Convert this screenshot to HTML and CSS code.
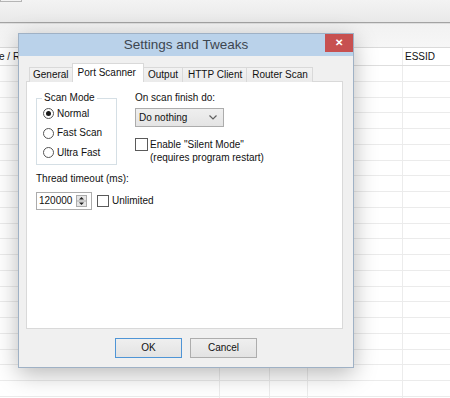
FILE: index.html
```html
<!doctype html>
<html>
  <head>
    <meta charset="utf-8">
    <meta name="viewport" content="width=device-width, initial-scale=1.0">
    <title>Settings and Tweaks</title>
    <link rel="stylesheet" href="styles.css">
  </head>
  <body>
    <div class="app">
      <div class="toolbar"><span class="tool-btn"></span></div>
      <div class="strip"></div>
      <div class="grid">
        <div class="grid-row grid-head"><span>e / R</span><span></span><span></span><span></span><span>ESSID</span></div>
        <div class="grid-row"><span></span><span></span><span></span><span></span><span></span></div>
        <div class="grid-row"><span></span><span></span><span></span><span></span><span></span></div>
        <div class="grid-row"><span></span><span></span><span></span><span></span><span></span></div>
        <div class="grid-row"><span></span><span></span><span></span><span></span><span></span></div>
        <div class="grid-row"><span></span><span></span><span></span><span></span><span></span></div>
        <div class="grid-row"><span></span><span></span><span></span><span></span><span></span></div>
        <div class="grid-row"><span></span><span></span><span></span><span></span><span></span></div>
        <div class="grid-row"><span></span><span></span><span></span><span></span><span></span></div>
        <div class="grid-row"><span></span><span></span><span></span><span></span><span></span></div>
        <div class="grid-row"><span></span><span></span><span></span><span></span><span></span></div>
        <div class="grid-row"><span></span><span></span><span></span><span></span><span></span></div>
        <div class="grid-row"><span></span><span></span><span></span><span></span><span></span></div>
        <div class="grid-row"><span></span><span></span><span></span><span></span><span></span></div>
        <div class="grid-row"><span></span><span></span><span></span><span></span><span></span></div>
        <div class="grid-row"><span></span><span></span><span></span><span></span><span></span></div>
        <div class="grid-row"><span></span><span></span><span></span><span></span><span></span></div>
        <div class="grid-row"><span></span><span></span><span></span><span></span><span></span></div>
        <div class="grid-row"><span></span><span></span><span></span><span></span><span></span></div>
        <div class="grid-row"><span></span><span></span><span></span><span></span><span></span></div>
        <div class="grid-row"><span></span><span></span><span></span><span></span><span></span></div>
        <div class="grid-row"><span></span><span></span><span></span><span></span><span></span></div>
        <div class="grid-row"><span></span><span></span><span></span><span></span><span></span></div>
      </div>
    </div>

    <div class="dialog">
      <div class="titlebar">
        <span></span>
        <span class="title">Settings and Tweaks</span>
        <span class="close">&#x2715;</span>
      </div>
      <div class="dialog-body">
        <div class="tabs">
          <span class="tab">General</span>
          <span class="tab active">Port Scanner</span>
          <span class="tab">Output</span>
          <span class="tab">HTTP Client</span>
          <span class="tab">Router Scan</span>
        </div>
        <div class="panel">
          <div class="top-row">
            <fieldset class="group">
              <legend>Scan Mode</legend>
              <div class="radio-row"><span class="radio checked"></span>Normal</div>
              <div class="radio-row"><span class="radio"></span>Fast Scan</div>
              <div class="radio-row"><span class="radio"></span>Ultra Fast</div>
            </fieldset>
            <div class="finish">
              <div class="label">On scan finish do:</div>
              <div class="select">
                <span>Do nothing</span>
                <svg width="8" height="5" viewBox="0 0 8 5"><path d="M0.5 0.5 L4 4 L7.5 0.5" fill="none" stroke="#606060" stroke-width="1.2"/></svg>
              </div>
              <div class="check-row"><span class="checkbox"></span>Enable "Silent Mode"</div>
              <div class="note">(requires program restart)</div>
            </div>
          </div>
          <div class="timeout">
            <div class="label">Thread timeout (ms):</div>
            <div class="timeout-row">
              <div class="spin">
                <span>120000</span>
                <span class="spin-btns">
                  <svg width="11" height="12" viewBox="0 0 11 12">
                    <rect x="0.5" y="0.5" width="10" height="11" fill="#e6e6e6" stroke="#acacac"/>
                    <line x1="1" y1="6" x2="10" y2="6" stroke="#acacac"/>
                    <path d="M3 4.5 L5.5 2 L8 4.5 Z" fill="#202020"/>
                    <path d="M3 7.5 L5.5 10 L8 7.5 Z" fill="#202020"/>
                  </svg>
                </span>
              </div>
              <div class="check-row"><span class="checkbox"></span>Unlimited</div>
            </div>
          </div>
        </div>
        <div class="buttons">
          <button class="btn default">OK</button>
          <button class="btn">Cancel</button>
        </div>
      </div>
    </div>
  </body>
</html>
```

FILE: styles.css
```css
body {
  background: #fafafa;
  font: 10px/1.2 "Liberation Sans", Arial, sans-serif;
  margin: 0;
  overflow: hidden;
}
.app {
  height: 398px;
  overflow: hidden;
}
.toolbar {
  background: linear-gradient(180deg, #f3f3f3 0%, #e9e9e9 100%);
  border-bottom: 1px solid #a3a3a3;
  height: 22px;
}
.tool-btn {
  border: 1px solid #b5b5b5;
  border-top: none;
  display: block;
  height: 1px;
  width: 20px;
}
.strip {
  background: linear-gradient(180deg, #f2f2f2 0%, #f6f6f6 100%);
  border-top: 1px solid #dedede;
  height: 23px;
}
.grid {
  background: #ffffff;
  border-top: 1px solid #dadada;
}
.grid-row {
  border-bottom: 1px solid #ebebeb;
  box-sizing: border-box;
  display: grid;
  grid-template-columns: 220px 50px 38px 95px 1fr;
  height: 15.75px;
}
  .grid-row span {
    border-right: 1px solid #ececec;
  }
  .grid-row span:last-child {
    border-right: none;
  }
.grid-head {
  border-bottom-color: #dedede;
  color: #111;
  height: 18px;
  line-height: 17px;
}
  .grid-head span:first-child {
    margin-left: -1px;
  }
  .grid-head span:last-child {
    padding-left: 2px;
  }

/* dialog window */
.dialog {
  background: #f0f0f0;
  border: 1px solid #9fb1c5;
  box-shadow: 0 6px 22px rgba(0, 0, 0, 0.28);
  box-sizing: border-box;
  color: #111;
  height: 335px;
  left: 18px;
  position: absolute;
  top: 33px;
  width: 336px;
}
.titlebar {
  background: #bad2ea;
  display: grid;
  grid-template-columns: 28px 1fr 28px;
  height: 22px;
}
.title {
  color: #3d4650;
  font-size: 13.5px;
  line-height: 22px;
  text-align: center;
}
.close {
  align-self: start;
  background: #c75050;
  color: #fff;
  font-size: 10px;
  font-weight: bold;
  height: 18px;
  line-height: 18px;
  text-align: center;
}
.dialog-body {
  padding-top: 8px;
}
.tabs {
  align-items: flex-end;
  display: flex;
  height: 18px;
  margin-bottom: -1px;
  margin-left: 10px;
}
.tab {
  background: linear-gradient(180deg, #f2f2f2 0%, #ebebeb 100%);
  border: 1px solid #d9d9d9;
  border-bottom: none;
  border-left: none;
  box-sizing: border-box;
  height: 15px;
  line-height: 14px;
  padding: 0 4px 0 5px;
}
  .tab:first-child {
    border-left: 1px solid #d9d9d9;
    padding-left: 3px;
  }
  .tab.active {
    background: #fff;
    border-left: 1px solid #d9d9d9;
    height: 19px;
    line-height: 17px;
    margin: 0 -1px 0 -2px;
    padding: 0 7px 0 5px;
    position: relative;
    z-index: 1;
  }
.panel {
  background: #fff;
  border: 1px solid #d9d9d9;
  box-sizing: border-box;
  height: 248px;
  margin-left: 7px;
  padding: 10px 9px;
  width: 317px;
}
.top-row {
  display: flex;
  gap: 18px;
}
.group {
  border: 1px solid #d5dfe5;
  box-sizing: border-box;
  margin: 0;
  padding: 0 0 1px 6px;
  width: 81px;
}
  .group legend {
    line-height: 12px;
    margin-left: -1px;
    padding: 0 2px;
  }
.radio-row {
  align-items: center;
  display: flex;
  gap: 3px;
  height: 19.5px;
}
.radio {
  background: #fff;
  border: 1px solid #555;
  border-radius: 50%;
  box-sizing: border-box;
  display: flex;
  align-items: center;
  justify-content: center;
  height: 11px;
  width: 11px;
}
  .radio.checked::after {
    background: #1a1a1a;
    border-radius: 50%;
    content: "";
    height: 5px;
    width: 5px;
  }
.finish {
  display: flex;
  flex-direction: column;
}
.label {
  line-height: 12px;
}
.select {
  align-items: center;
  background: linear-gradient(180deg, #efefef 0%, #e4e4e4 100%);
  border: 1px solid #acacac;
  box-sizing: border-box;
  display: flex;
  height: 19px;
  justify-content: space-between;
  margin-top: 4px;
  padding: 0 6px 0 3px;
  width: 89px;
}
.check-row {
  align-items: center;
  display: flex;
  gap: 2px;
  height: 13px;
  margin-top: 11px;
}
.checkbox {
  background: #fff;
  border: 1px solid #5a5a5a;
  box-sizing: border-box;
  height: 13px;
  width: 13px;
}
.note {
  line-height: 14px;
  padding-left: 15px;
}
.timeout {
  margin-top: 8px;
}
.timeout-row {
  align-items: center;
  display: flex;
  gap: 5px;
  margin-top: 7px;
}
  .timeout-row .check-row {
    gap: 3px;
    margin-top: 0;
  }
  .timeout-row .checkbox {
    height: 12px;
    width: 12px;
  }
.spin {
  align-items: center;
  background: #fff;
  border: 1px solid #acacac;
  box-sizing: border-box;
  display: flex;
  height: 18px;
  justify-content: space-between;
  padding: 0 4px 0 2px;
  width: 56px;
}
.spin-btns {
  display: flex;
}
.buttons {
  display: flex;
  gap: 8px;
  justify-content: center;
  margin-top: 9px;
}
.btn {
  appearance: none;
  background: linear-gradient(180deg, #efefef 0%, #e3e3e3 100%);
  border: 1px solid #adadad;
  color: #111;
  font: inherit;
  height: 20px;
  margin: 0;
  padding: 0;
  width: 67px;
}
  .btn.default {
    border-color: #4f95d6;
  }
```
